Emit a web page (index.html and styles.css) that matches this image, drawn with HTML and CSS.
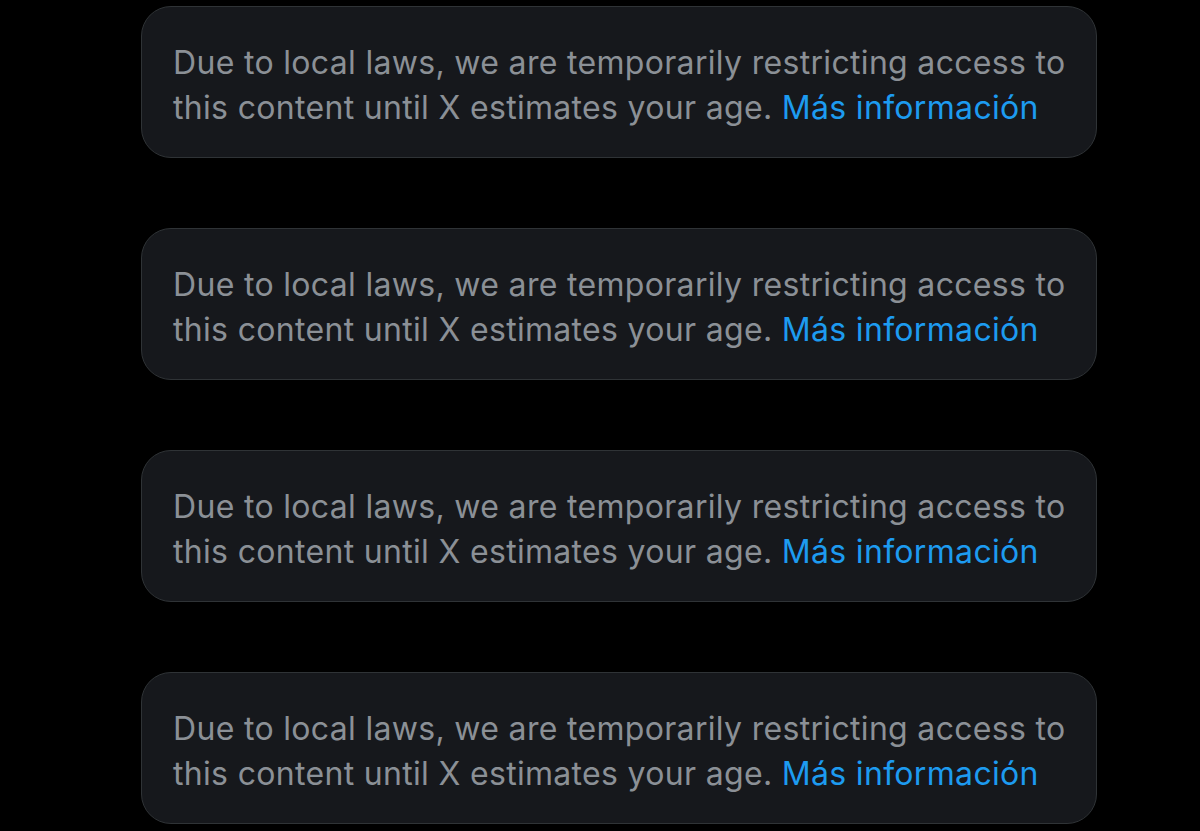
FILE: index.html
```html
<!DOCTYPE html>
<html lang="en">
    <head>
        <meta charset="utf-8">
        <meta name="viewport" content="width=device-width, initial-scale=1">
        <link rel="stylesheet" href="styles.css">
        <title>Restricted content</title>
    </head>
    <body>
        <div class="feed">
            <div class="notice">
                <p>Due to local laws, we are temporarily restricting access to this content until X estimates your age. <a href="#">Más información</a></p>
            </div>
            <div class="notice">
                <p>Due to local laws, we are temporarily restricting access to this content until X estimates your age. <a href="#">Más información</a></p>
            </div>
            <div class="notice">
                <p>Due to local laws, we are temporarily restricting access to this content until X estimates your age. <a href="#">Más información</a></p>
            </div>
            <div class="notice">
                <p>Due to local laws, we are temporarily restricting access to this content until X estimates your age. <a href="#">Más información</a></p>
            </div>
        </div>
    </body>
</html>
```

FILE: styles.css
```css
html, body {
    margin: 0;
    padding: 0;
    background-color: #000;
}

body {
    font-family: Inter, Roboto, "Liberation Sans", sans-serif;
    color: #8b9096;
    overflow: hidden;
}

.feed {
    display: flex;
    flex-direction: column;
    gap: 70px;
    width: 956px;
    margin: 6px 0 0 141px;
}

.notice {
    box-sizing: border-box;
    height: 152px;
    padding: 33px 20px 0 31px;
    background-color: #16181c;
    border: 1px solid #2f3336;
    border-radius: 30px;
}

.notice p {
    margin: 0;
    font-size: 32px;
    line-height: 45px;
    letter-spacing: 0.32px;
}

.notice a {
    color: #1d9bf0;
    text-decoration: none;
}
```
